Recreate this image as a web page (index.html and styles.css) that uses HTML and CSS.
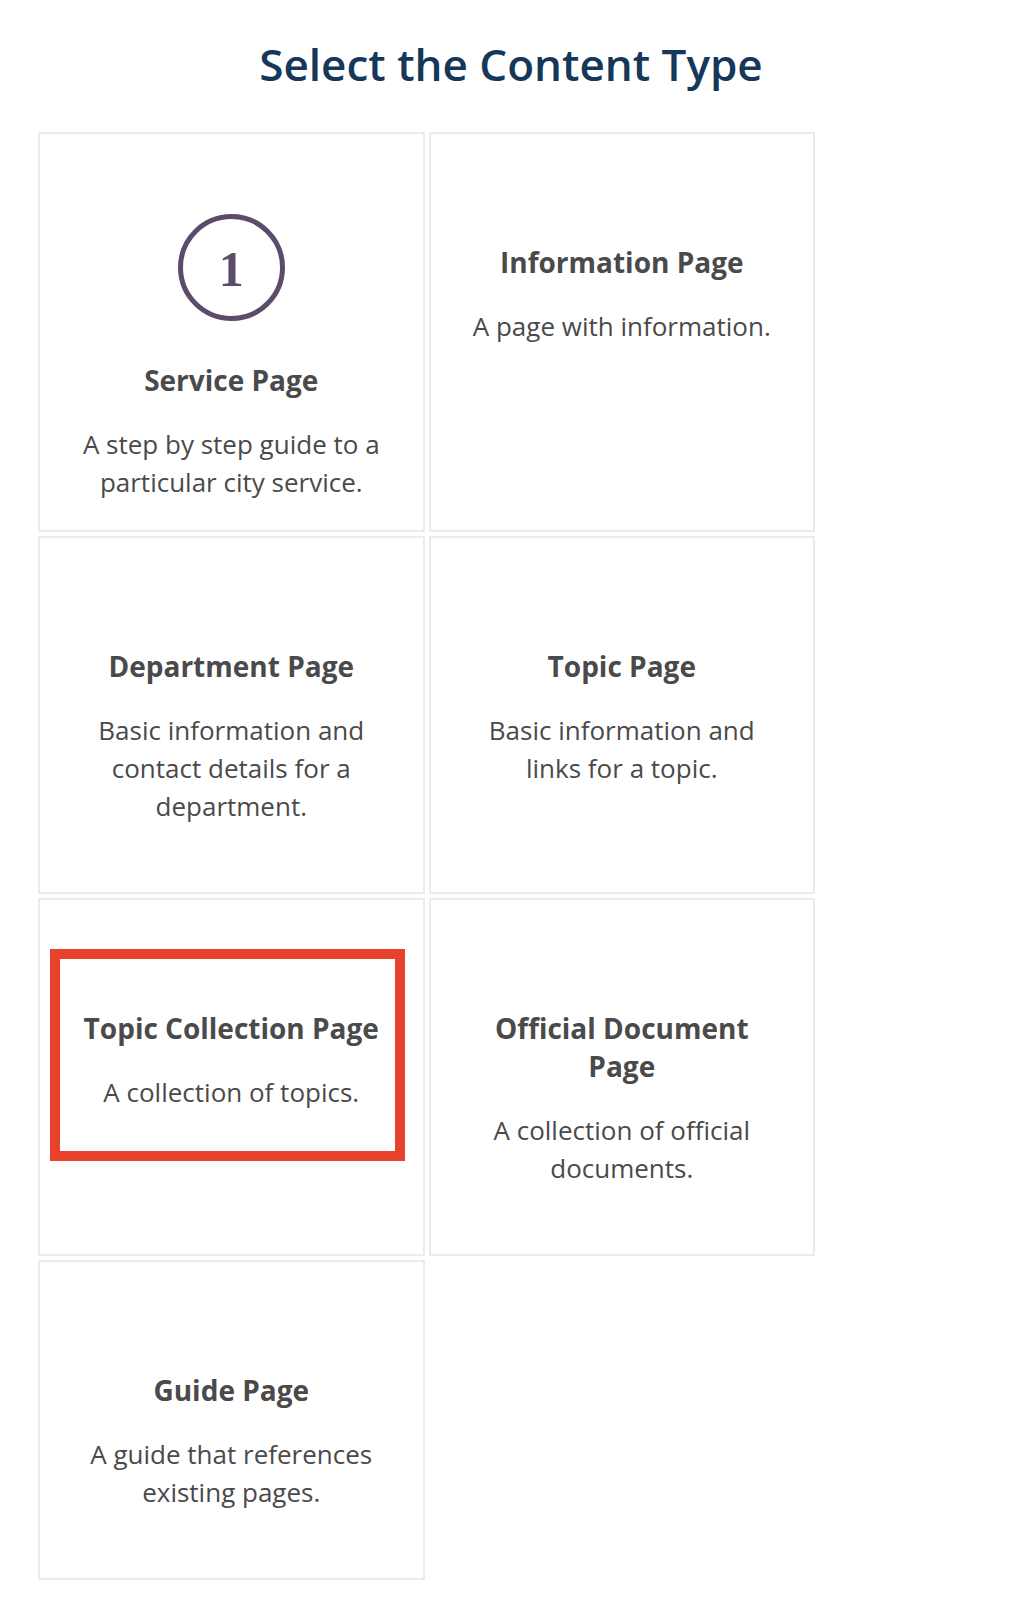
FILE: index.html
```html
<!DOCTYPE html>
<html lang="en">
<head>
<meta charset="utf-8">
<title>Select the Content Type</title>
<link rel="stylesheet" href="styles.css">
</head>
<body>
<main class="page">
  <h1 class="page-title">Select the Content Type</h1>
  <div class="type-grid">
    <div class="type-card type-card--icon">
      <div class="step-badge"><span>1</span></div>
      <h2 class="type-name">Service Page</h2>
      <p class="type-desc">A step by step guide to a particular city service.</p>
    </div>
    <div class="type-card">
      <h2 class="type-name">Information Page</h2>
      <p class="type-desc">A page with information.</p>
    </div>
    <div class="type-card">
      <h2 class="type-name">Department Page</h2>
      <p class="type-desc">Basic information and contact details for a department.</p>
    </div>
    <div class="type-card">
      <h2 class="type-name">Topic Page</h2>
      <p class="type-desc">Basic information and links for a topic.</p>
    </div>
    <div class="type-card type-card--marked">
      <h2 class="type-name">Topic Collection Page</h2>
      <p class="type-desc">A collection of topics.</p>
      <div class="highlight-box"></div>
    </div>
    <div class="type-card">
      <h2 class="type-name">Official Document Page</h2>
      <p class="type-desc">A collection of official documents.</p>
    </div>
    <div class="type-card">
      <h2 class="type-name">Guide Page</h2>
      <p class="type-desc">A guide that references existing pages.</p>
    </div>
  </div>
</main>
</body>
</html>
```
FILE: styles.css
```css
html, body {
  margin: 0;
  padding: 0;
  background: #ffffff;
}

body {
  font-family: "Open Sans", "Liberation Sans", sans-serif;
  color: #4a4a4a;
}

.page {
  padding: 36px 0 0;
}

.page-title {
  margin: 0;
  text-align: center;
  font-size: 44px;
  line-height: 56px;
  font-weight: 600;
  color: #15385a;
}

.type-grid {
  margin: 40px 0 0 38px;
  width: 777px;
  display: grid;
  grid-template-columns: 1fr 1fr;
  column-gap: 4px;
  row-gap: 4px;
}

.type-card {
  position: relative;
  border: 2px solid #ebebeb;
  padding: 109px 40px 67px;
  display: flex;
  flex-direction: column;
  align-items: center;
  text-align: center;
}

.type-card--icon {
  padding-top: 80px;
  padding-bottom: 29px;
}

.step-badge {
  width: 97px;
  height: 97px;
  border: 5px solid #5b4c6a;
  border-radius: 50%;
  display: flex;
  align-items: center;
  justify-content: center;
  margin-bottom: 40px;
}

.step-badge span {
  font-family: "Liberation Serif", "DejaVu Serif", serif;
  font-weight: 700;
  font-size: 50px;
  line-height: 1;
  color: #5b4c6a;
  margin-top: 2px;
}

.type-name {
  margin: 0;
  font-size: 28px;
  line-height: 38px;
  font-weight: 700;
  color: #4a4a4a;
}

.type-desc {
  margin: 26px 0 0;
  font-size: 26px;
  line-height: 38px;
  font-weight: 400;
  color: #4a4a4a;
}

.highlight-box {
  position: absolute;
  left: 10px;
  top: 49px;
  width: 335px;
  height: 192px;
  border: 10px solid #e8412c;
}
```
